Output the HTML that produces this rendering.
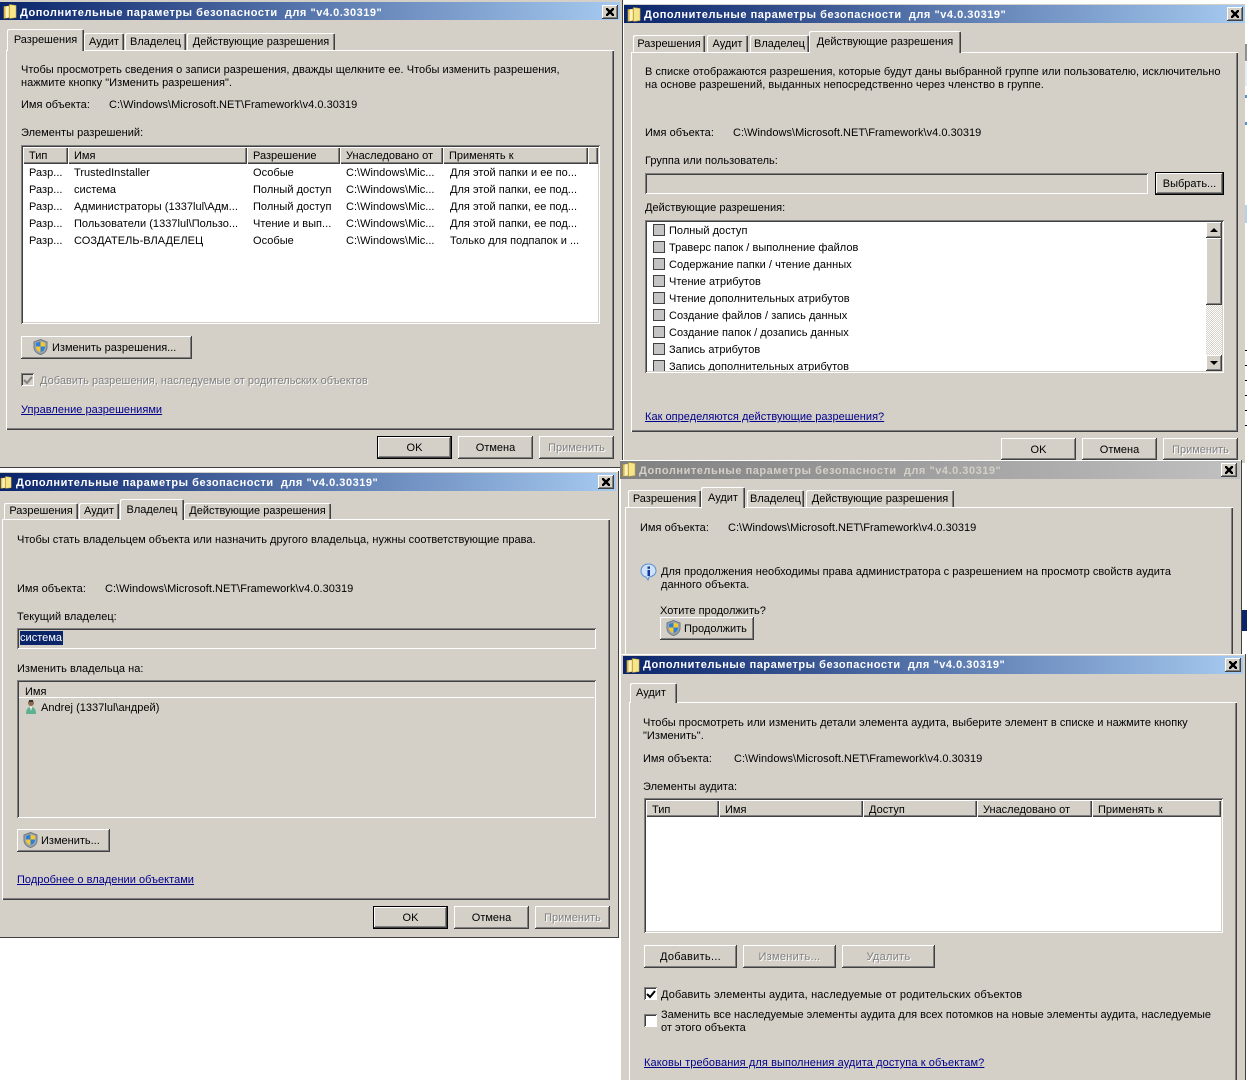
<!DOCTYPE html>
<html lang="ru"><head><meta charset="utf-8"><title>Дополнительные параметры безопасности</title>
<style>
html,body{margin:0;padding:0;background:#fff;overflow:hidden;width:1247px;height:1080px}
body{position:relative;font:11px/13px "Liberation Sans",sans-serif;color:#000}
div,span,svg,a{position:absolute}
.t,a{white-space:pre;line-height:13px;margin-top:1px;letter-spacing:.03px}
a{color:#00008b;text-decoration:underline}
.d{color:#808080;text-shadow:1px 1px 0 #fff}
.w{background:#d4d0c8;box-shadow:inset -1px -1px #404040}
.tb{background:linear-gradient(90deg,#0a246a,#a6caf0);height:18px}
.tb.g{background:linear-gradient(90deg,#808080,#c0c0c0)}
.tt{color:#fff;font-weight:bold;white-space:pre;line-height:13px;letter-spacing:.53px}
.tt.g{color:#d4d0c8}
.x{width:16px;height:14px;background:#d4d0c8;box-shadow:inset -1px -1px #404040,inset 1px 1px #fff,inset -2px -2px #808080}
.x:after{content:"";position:absolute;left:4px;top:3px;width:8px;height:8px;background:linear-gradient(45deg,transparent 40%,#000 40%,#000 60%,transparent 60%),linear-gradient(-45deg,transparent 40%,#000 40%,#000 60%,transparent 60%)}
.p{background:#d4d0c8;box-shadow:inset 1px 1px #fff,inset -1px -1px #404040,inset -2px -2px #808080}
.tab{background:#d4d0c8;border-radius:2px 2px 0 0;box-shadow:inset 1px 1px #fff,inset -1px 0 #404040,inset -2px 0 #808080;line-height:13px;white-space:pre;text-align:center;box-sizing:border-box}
.b{background:#d4d0c8;box-shadow:inset -1px -1px #404040,inset 1px 1px #fff,inset -2px -2px #808080;text-align:center;line-height:24px;white-space:pre}
.def{outline:1px solid #000;outline-offset:-1px;box-shadow:inset -2px -2px #404040,inset 2px 2px #fff,inset -3px -3px #808080}
.s{box-shadow:inset 1px 1px #808080,inset -1px -1px #fff,inset 2px 2px #404040,inset -2px -2px #d4d0c8}
.h{background:#d4d0c8;box-shadow:inset 1px 1px #fff,inset -1px -1px #404040,inset -2px -2px #808080;white-space:pre;line-height:19px;padding-left:6px;box-sizing:border-box}
.c{width:13px;height:13px;background:#fff;box-sizing:border-box;box-shadow:inset 1px 1px #808080,inset -1px -1px #fff,inset 2px 2px #404040}
.c.g{background:#d4d0c8}
.c2{width:12px;height:12px;background:#c4c4c4;box-sizing:border-box;border:1px solid #404040}
.sb{background:#d4d0c8;box-shadow:inset -1px -1px #404040,inset 1px 1px #fff,inset -2px -2px #808080}
.hat{background:repeating-conic-gradient(#d4d0c8 0 25%,#fff 0 50%) 0 0/2px 2px}
</style></head><body>
<svg width="0" height="0" style="left:0;top:0"><defs>
<symbol id="fo" viewBox="0 0 15 17"><path d="M1 3h5l1-2v14l-6 1z" fill="#e8c85a" stroke="#a88a30" stroke-width=".6"/><path d="M7 1l7 1v13l-7 1z" fill="#f7e58a" stroke="#b79a3a" stroke-width=".6"/><path d="M3 3l3-.5V15l-3 .5z" fill="#fbf2c0"/></symbol>
<symbol id="sh" viewBox="0 0 15 16"><path d="M7.5 .5L14 3v5c0 4-3 6.500-6.500 7.500C4 14.500 1 12 1 8V3z" fill="#9aa4ac" stroke="#6e7880"/><path d="M7.500 2.500L3 4v3.500h4.500z" fill="#2f7fd8"/><path d="M7.500 2.500L12 4v3.500H7.500z" fill="#f5c92e"/><path d="M3 7.500h4.500v5.500C5 12.500 3 10.500 3 7.500z" fill="#f5c92e"/><path d="M12 7.500H7.500v5.500C10 12.500 12 10.500 12 7.500z" fill="#2f7fd8"/></symbol>
</defs></svg>

<!-- Window 1 -->
<div class="w" style="left:0;top:0;width:623px;height:468px"></div>
<div class="tb" style="left:0;top:2px;width:620px"></div>
<svg style="left:3px;top:3px" width="14" height="17"><use href="#fo"/></svg>
<span class="tt" style="left:20px;top:7px">Дополнительные параметры безопасности  для "v4.0.30319"</span>
<div class="x" style="left:602px;top:5px"></div>
<div class="p" style="left:6px;top:50px;width:608px;height:380px"></div>
<div class="tab" style="left:7px;top:29px;width:77px;height:22px;padding-top:5px;z-index:1">Разрешения</div>
<div class="tab" style="left:84px;top:33px;width:40px;height:17px;padding-top:3px">Аудит</div>
<div class="tab" style="left:125px;top:33px;width:61px;height:17px;padding-top:3px">Владелец</div>
<div class="tab" style="left:187px;top:33px;width:148px;height:17px;padding-top:3px">Действующие разрешения</div>
<span class="t" style="left:21px;top:63px">Чтобы просмотреть сведения о записи разрешения, дважды щелкните ее. Чтобы изменить разрешения,</span>
<span class="t" style="left:21px;top:76px">нажмите кнопку "Изменить разрешения".</span>
<span class="t" style="left:21px;top:98px">Имя объекта:</span>
<span class="t" style="left:109px;top:98px">C:\Windows\Microsoft.NET\Framework\v4.0.30319</span>
<span class="t" style="left:21px;top:126px">Элементы разрешений:</span>
<div class="s" style="left:21px;top:145px;width:579px;height:179px;background:#fff"></div>
<div class="h" style="left:23px;top:147px;width:45px;height:17px">Тип</div>
<div class="h" style="left:68px;top:147px;width:179px;height:17px">Имя</div>
<div class="h" style="left:247px;top:147px;width:93px;height:17px">Разрешение</div>
<div class="h" style="left:340px;top:147px;width:103px;height:17px">Унаследовано от</div>
<div class="h" style="left:443px;top:147px;width:145px;height:17px">Применять к</div>
<div class="h" style="left:588px;top:147px;width:10px;height:17px"></div>
<span class="t" style="left:29px;top:166px">Разр...</span><span class="t" style="left:74px;top:166px">TrustedInstaller</span><span class="t" style="left:253px;top:166px">Особые</span><span class="t" style="left:346px;top:166px">C:\Windows\Mic...</span><span class="t" style="left:450px;top:166px">Для этой папки и ее по...</span>
<span class="t" style="left:29px;top:183px">Разр...</span><span class="t" style="left:74px;top:183px">система</span><span class="t" style="left:253px;top:183px">Полный доступ</span><span class="t" style="left:346px;top:183px">C:\Windows\Mic...</span><span class="t" style="left:450px;top:183px">Для этой папки, ее под...</span>
<span class="t" style="left:29px;top:200px">Разр...</span><span class="t" style="left:74px;top:200px">Администраторы (1337lul\Адм...</span><span class="t" style="left:253px;top:200px">Полный доступ</span><span class="t" style="left:346px;top:200px">C:\Windows\Mic...</span><span class="t" style="left:450px;top:200px">Для этой папки, ее под...</span>
<span class="t" style="left:29px;top:217px">Разр...</span><span class="t" style="left:74px;top:217px">Пользователи (1337lul\Пользо...</span><span class="t" style="left:253px;top:217px">Чтение и вып...</span><span class="t" style="left:346px;top:217px">C:\Windows\Mic...</span><span class="t" style="left:450px;top:217px">Для этой папки, ее под...</span>
<span class="t" style="left:29px;top:234px">Разр...</span><span class="t" style="left:74px;top:234px">СОЗДАТЕЛЬ-ВЛАДЕЛЕЦ</span><span class="t" style="left:253px;top:234px">Особые</span><span class="t" style="left:346px;top:234px">C:\Windows\Mic...</span><span class="t" style="left:450px;top:234px">Только для подпапок и ...</span>
<div class="b" style="left:21px;top:336px;width:171px;height:23px;text-align:left;padding-left:31px;box-sizing:border-box">Изменить разрешения...</div>
<svg style="left:33px;top:339px" width="15" height="16"><use href="#sh"/></svg>
<div class="c g" style="left:21px;top:373px"></div>
<svg style="left:23px;top:375px" width="10" height="10" viewBox="0 0 10 10"><path d="M1 5l3 3 5-6" fill="none" stroke="#808080" stroke-width="2"/></svg>
<span class="t d" style="left:40px;top:374px">Добавить разрешения, наследуемые от родительских объектов</span>
<a style="left:21px;top:403px">Управление разрешениями</a>
<div class="b def" style="left:377px;top:436px;width:75px;height:23px">OK</div>
<div class="b" style="left:458px;top:436px;width:75px;height:23px">Отмена</div>
<div class="b d" style="left:539px;top:436px;width:75px;height:23px">Применить</div>

<!-- Right background strip -->
<div style="left:1245px;top:44px;width:2px;height:17px;background:#909090"></div>
<div style="left:1245px;top:62px;width:2px;height:24px;background:#e8eef6"></div>
<div style="left:1245px;top:95px;width:2px;height:3px;background:#5a90d0"></div>
<div style="left:1245px;top:122px;width:2px;height:3px;background:#5a90d0"></div>
<div style="left:1245px;top:205px;width:2px;height:18px;background:#b8d0ec"></div>
<div style="left:1245px;top:350px;width:2px;height:1px;background:#000"></div>
<div style="left:1245px;top:365px;width:2px;height:1px;background:#000"></div>
<div style="left:1245px;top:380px;width:2px;height:1px;background:#000"></div>
<div style="left:1245px;top:395px;width:2px;height:1px;background:#000"></div>
<div style="left:1245px;top:410px;width:2px;height:1px;background:#000"></div>
<div style="left:1245px;top:425px;width:2px;height:1px;background:#000"></div>
<div style="left:1242px;top:610px;width:5px;height:21px;background:#0a246a"></div>

<!-- Window 2 -->
<div class="w" style="left:623px;top:3px;width:622px;height:460px;box-shadow:inset 1px 1px #fff"></div>
<div class="tb" style="left:624px;top:5px;width:621px"></div>
<svg style="left:627px;top:6px" width="14" height="17"><use href="#fo"/></svg>
<span class="tt" style="left:644px;top:9px">Дополнительные параметры безопасности  для "v4.0.30319"</span>
<div class="x" style="left:1227px;top:7px"></div>
<div class="p" style="left:631px;top:52px;width:607px;height:380px"></div>
<div class="tab" style="left:633px;top:35px;width:72px;height:17px;padding-top:3px">Разрешения</div>
<div class="tab" style="left:707px;top:35px;width:41px;height:17px;padding-top:3px">Аудит</div>
<div class="tab" style="left:750px;top:35px;width:59px;height:17px;padding-top:3px">Владелец</div>
<div class="tab" style="left:809px;top:31px;width:152px;height:22px;padding-top:5px">Действующие разрешения</div>
<span class="t" style="left:645px;top:65px">В списке отображаются разрешения, которые будут даны выбранной группе или пользователю, исключительно</span>
<span class="t" style="left:645px;top:78px">на основе разрешений, выданных непосредственно через членство в группе.</span>
<span class="t" style="left:645px;top:126px">Имя объекта:</span>
<span class="t" style="left:733px;top:126px">C:\Windows\Microsoft.NET\Framework\v4.0.30319</span>
<span class="t" style="left:645px;top:154px">Группа или пользователь:</span>
<div class="s" style="left:645px;top:173px;width:503px;height:21px"></div>
<div class="b def" style="left:1155px;top:172px;width:69px;height:23px">Выбрать...</div>
<span class="t" style="left:645px;top:201px">Действующие разрешения:</span>
<div class="s" style="left:645px;top:220px;width:579px;height:153px;background:#fff"></div>
<div class="c2" style="left:653px;top:224px"></div><span class="t" style="left:669px;top:224px">Полный доступ</span>
<div class="c2" style="left:653px;top:241px"></div><span class="t" style="left:669px;top:241px">Траверс папок / выполнение файлов</span>
<div class="c2" style="left:653px;top:258px"></div><span class="t" style="left:669px;top:258px">Содержание папки / чтение данных</span>
<div class="c2" style="left:653px;top:275px"></div><span class="t" style="left:669px;top:275px">Чтение атрибутов</span>
<div class="c2" style="left:653px;top:292px"></div><span class="t" style="left:669px;top:292px">Чтение дополнительных атрибутов</span>
<div class="c2" style="left:653px;top:309px"></div><span class="t" style="left:669px;top:309px">Создание файлов / запись данных</span>
<div class="c2" style="left:653px;top:326px"></div><span class="t" style="left:669px;top:326px">Создание папок / дозапись данных</span>
<div class="c2" style="left:653px;top:343px"></div><span class="t" style="left:669px;top:343px">Запись атрибутов</span>
<div style="left:647px;top:355px;width:559px;height:16px;overflow:hidden"><div class="c2" style="left:6px;top:5px"></div><span class="t" style="left:22px;top:5px">Запись дополнительных атрибутов</span></div>
<div class="hat" style="left:1206px;top:222px;width:16px;height:149px"></div>
<div class="sb" style="left:1206px;top:222px;width:16px;height:16px"></div>
<svg style="left:1206px;top:222px" width="16" height="16"><path d="M4 10h8L8 6z" fill="#000"/></svg>
<div class="sb" style="left:1206px;top:238px;width:16px;height:67px"></div>
<div class="sb" style="left:1206px;top:355px;width:16px;height:16px"></div>
<svg style="left:1206px;top:355px" width="16" height="16"><path d="M4 6h8L8 10z" fill="#000"/></svg>
<a style="left:645px;top:410px">Как определяются действующие разрешения?</a>
<div class="b" style="left:1001px;top:438px;width:75px;height:22px">OK</div>
<div class="b" style="left:1082px;top:438px;width:75px;height:22px">Отмена</div>
<div class="b d" style="left:1163px;top:438px;width:75px;height:22px">Применить</div>

<!-- Window 3 -->
<div class="w" style="left:0;top:471px;width:619px;height:467px;box-shadow:inset -1px -1px #404040,inset 0 1px #fff"></div>
<div class="tb" style="left:0;top:473px;width:616px"></div>
<svg style="left:0;top:474px" width="12" height="17"><use href="#fo"/></svg>
<span class="tt" style="left:16px;top:477px">Дополнительные параметры безопасности  для "v4.0.30319"</span>
<div class="x" style="left:598px;top:475px"></div>
<div class="p" style="left:2px;top:519px;width:608px;height:381px"></div>
<div class="tab" style="left:4px;top:503px;width:74px;height:16px;padding-top:2px">Разрешения</div>
<div class="tab" style="left:79px;top:503px;width:40px;height:16px;padding-top:2px">Аудит</div>
<div class="tab" style="left:120px;top:499px;width:64px;height:21px;padding-top:5px">Владелец</div>
<div class="tab" style="left:184px;top:503px;width:147px;height:16px;padding-top:2px">Действующие разрешения</div>
<span class="t" style="left:17px;top:533px">Чтобы стать владельцем объекта или назначить другого владельца, нужны соответствующие права.</span>
<span class="t" style="left:17px;top:582px">Имя объекта:</span>
<span class="t" style="left:105px;top:582px">C:\Windows\Microsoft.NET\Framework\v4.0.30319</span>
<span class="t" style="left:17px;top:610px">Текущий владелец:</span>
<div class="s" style="left:17px;top:628px;width:579px;height:21px"></div>
<div style="left:20px;top:631px;width:43px;height:14px;background:#0a246a"></div>
<span class="t" style="left:20px;top:631px;color:#fff">система</span>
<span class="t" style="left:17px;top:662px">Изменить владельца на:</span>
<div class="s" style="left:17px;top:680px;width:579px;height:138px"></div>
<div class="h" style="left:19px;top:682px;width:575px;height:16px;padding-left:6px;box-shadow:inset 0 -1px #fff;line-height:20px">Имя</div>
<svg style="left:24px;top:699px" width="14" height="16" viewBox="0 0 14 16"><circle cx="7" cy="4" r="3" fill="#8a6a50"/><path d="M5 1h4v2H5z" fill="#333"/><path d="M2 15c0-5 2-7 5-7s5 2 5 7z" fill="#5fb090"/><path d="M6 8h2l-1 4z" fill="#fff"/></svg>
<span class="t" style="left:41px;top:701px">Andrej (1337lul\андрей)</span>
<div class="b" style="left:17px;top:829px;width:93px;height:23px;text-align:left;padding-left:24px;box-sizing:border-box">Изменить...</div>
<svg style="left:23px;top:832px" width="15" height="16"><use href="#sh"/></svg>
<a style="left:17px;top:873px">Подробнее о владении объектами</a>
<div class="b def" style="left:373px;top:906px;width:75px;height:23px">OK</div>
<div class="b" style="left:454px;top:906px;width:75px;height:23px">Отмена</div>
<div class="b d" style="left:535px;top:906px;width:75px;height:23px">Применить</div>

<!-- Window 4 -->
<div class="w" style="left:620px;top:460px;width:622px;height:200px;box-shadow:inset -1px 0 #404040,inset 1px 1px #fff"></div>
<div class="tb g" style="left:620px;top:461px;width:620px"></div>
<svg style="left:622px;top:461px" width="14" height="17"><use href="#fo"/></svg>
<span class="tt g" style="left:639px;top:465px">Дополнительные параметры безопасности  для "v4.0.30319"</span>
<div class="x" style="left:1221px;top:463px"></div>
<div class="p" style="left:625px;top:507px;width:608px;height:160px"></div>
<div class="tab" style="left:628px;top:490px;width:73px;height:17px;padding-top:3px">Разрешения</div>
<div class="tab" style="left:701px;top:487px;width:44px;height:21px;padding-top:5px">Аудит</div>
<div class="tab" style="left:747px;top:490px;width:57px;height:17px;padding-top:3px">Владелец</div>
<div class="tab" style="left:806px;top:490px;width:148px;height:17px;padding-top:3px">Действующие разрешения</div>
<span class="t" style="left:640px;top:521px">Имя объекта:</span>
<span class="t" style="left:728px;top:521px">C:\Windows\Microsoft.NET\Framework\v4.0.30319</span>
<svg style="left:640px;top:563px" width="17" height="18" viewBox="0 0 17 18"><path d="M8.500 1C4 1 1 4 1 8c0 3 2 5.500 5 6l2 3 1-3c4-.5 7-3 7-6 0-4-3-7-7.500-7z" fill="#cfe2fa" stroke="#5b8fd0"/><rect x="7.500" y="7" width="2.500" height="6" fill="#123a9a"/><rect x="7.500" y="3.500" width="2.500" height="2.300" fill="#123a9a"/></svg>
<span class="t" style="left:661px;top:565px">Для продолжения необходимы права администратора с разрешением на просмотр свойств аудита</span>
<span class="t" style="left:661px;top:578px">данного объекта.</span>
<span class="t" style="left:660px;top:604px">Хотите продолжить?</span>
<div class="b" style="left:660px;top:617px;width:94px;height:23px;text-align:left;padding-left:24px;box-sizing:border-box">Продолжить</div>
<svg style="left:666px;top:620px" width="15" height="16"><use href="#sh"/></svg>

<!-- Window 5 -->
<div class="w" style="left:620px;top:654px;width:626px;height:426px;box-shadow:inset -1px 0 #404040,inset 1px 1px #fff"></div>
<div class="tb" style="left:623px;top:656px;width:620px"></div>
<svg style="left:626px;top:657px" width="14" height="17"><use href="#fo"/></svg>
<span class="tt" style="left:643px;top:659px">Дополнительные параметры безопасности  для "v4.0.30319"</span>
<div class="x" style="left:1225px;top:658px"></div>
<div class="p" style="left:629px;top:702px;width:608px;height:378px;box-shadow:inset 1px 1px #fff,inset -1px 0 #404040,inset -2px 0 #808080"></div>
<div class="tab" style="left:630px;top:683px;width:47px;height:20px;padding:4px 0 0 6px;text-align:left">Аудит</div>
<span class="t" style="left:643px;top:716px">Чтобы просмотреть или изменить детали элемента аудита, выберите элемент в списке и нажмите кнопку</span>
<span class="t" style="left:643px;top:729px">"Изменить".</span>
<span class="t" style="left:643px;top:752px">Имя объекта:</span>
<span class="t" style="left:734px;top:752px">C:\Windows\Microsoft.NET\Framework\v4.0.30319</span>
<span class="t" style="left:643px;top:780px">Элементы аудита:</span>
<div class="s" style="left:644px;top:798px;width:579px;height:135px;background:#fff"></div>
<div class="h" style="left:646px;top:800px;width:73px;height:17px;line-height:20px">Тип</div>
<div class="h" style="left:719px;top:800px;width:144px;height:17px;line-height:20px">Имя</div>
<div class="h" style="left:863px;top:800px;width:114px;height:17px;line-height:20px">Доступ</div>
<div class="h" style="left:977px;top:800px;width:115px;height:17px;line-height:20px">Унаследовано от</div>
<div class="h" style="left:1092px;top:800px;width:129px;height:17px;line-height:20px">Применять к</div>
<div class="b" style="left:644px;top:945px;width:93px;height:23px;letter-spacing:.3px">Добавить...</div>
<div class="b d" style="left:743px;top:945px;width:93px;height:23px;letter-spacing:.3px">Изменить...</div>
<div class="b d" style="left:842px;top:945px;width:93px;height:23px;letter-spacing:.3px">Удалить</div>
<div class="c" style="left:644px;top:987px"></div>
<svg style="left:646px;top:989px" width="10" height="10" viewBox="0 0 10 10"><path d="M1 5l3 3 5-6" fill="none" stroke="#000" stroke-width="2"/></svg>
<span class="t" style="left:661px;top:988px;letter-spacing:.15px">Добавить элементы аудита, наследуемые от родительских объектов</span>
<div class="c" style="left:644px;top:1014px"></div>
<span class="t" style="left:661px;top:1008px;letter-spacing:.01px">Заменить все наследуемые элементы аудита для всех потомков на новые элементы аудита, наследуемые</span>
<span class="t" style="left:661px;top:1021px">от этого объекта</span>
<a style="left:644px;top:1056px;letter-spacing:.1px">Каковы требования для выполнения аудита доступа к объектам?</a>
</body></html>
